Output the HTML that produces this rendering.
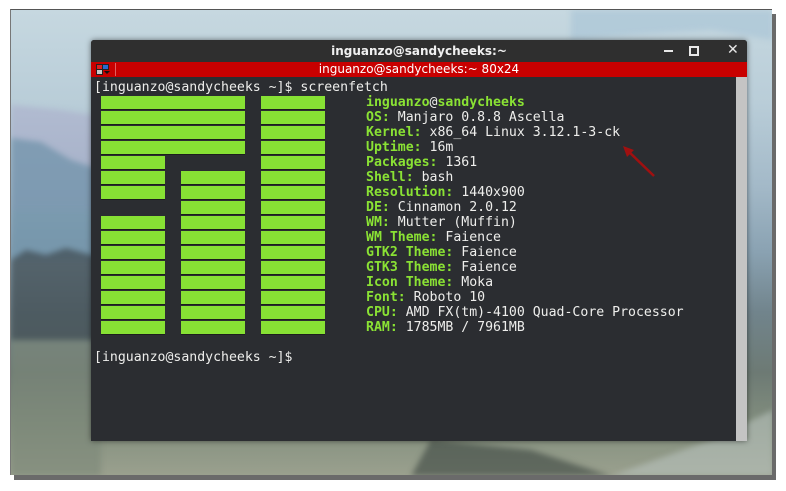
<!DOCTYPE html>
<html><head><meta charset="utf-8"><style>
*{margin:0;padding:0;box-sizing:border-box}
body{width:786px;height:491px;background:#fff;position:relative;overflow:hidden;font-family:"DejaVu Sans Mono","Liberation Mono",monospace}
.shadow{position:absolute;left:14px;top:14px;width:762px;height:466px;background:#6a6a6a}
.bg{position:absolute;left:10px;top:9px;width:762px;height:466px;overflow:hidden;border-top:1px solid #555;border-left:1px solid #777;
background:linear-gradient(180deg,#c6d8e0 0%,#b9cdd8 20%,#a3b9c8 38%,#8aa2b2 52%,#71848c 65%,#6d7a74 78%,#84907f 90%,#9aa08e 100%)}
.mt{position:absolute;left:0;top:0;filter:blur(3px)}
.win{position:absolute;left:91px;top:40px;width:656px;height:401px;background:#2b2d31;box-shadow:0 0 6px rgba(0,0,0,.5);border-radius:3px 3px 0 0;overflow:hidden}
.title{height:22px;background:#2f2f2f;color:#f0f0f0;font-family:"DejaVu Sans","Liberation Sans",sans-serif;font-weight:bold;font-size:12px;text-align:center;line-height:22px}
.red{height:15px;background:#c80000;color:#fff;font-family:"DejaVu Sans","Liberation Sans",sans-serif;font-size:12px;line-height:15px;text-align:center;position:relative}
.sb{position:absolute;right:0;top:37px;width:11px;bottom:0;background:#c4c4c4}
.t{position:absolute;left:3px;white-space:pre;color:#eeeeec;font-size:13.2px;line-height:15px}
.b{position:absolute;height:13px;background:#87e134;box-shadow:0 1px 0 #1c1e1c}
.g{color:#8ae234;font-weight:bold}
</style></head><body>
<div class="shadow"></div>
<div class="bg">
 <svg class="mt" width="762" height="466" viewBox="0 0 762 466">
  <path d="M0 95 L50 100 L100 108 L90 200 L0 200Z" fill="#a9a9c9" opacity=".5"/>
  <path d="M0 128 L30 132 L60 150 L90 160 L90 250 L0 250Z" fill="#6e92a8" opacity=".7"/>
  <path d="M0 250 L15 240 L35 245 L55 238 L80 245 L90 250 L90 330 L0 330Z" fill="#3e4a50" opacity=".7"/>
  <path d="M0 330 L90 330 L90 466 L0 466Z" fill="#7c8778" opacity=".6"/>
  <path d="M420 430 L520 440 L600 466 L400 466Z" fill="#3a4440" opacity=".6"/>
  <path d="M600 466 L700 430 L762 400 L762 466Z" fill="#b8c2bc" opacity=".6"/>
  <path d="M560 30 L620 25 L700 20 L762 30 L762 0 L560 0Z" fill="#a7c3d6" opacity=".6"/>
 </svg>
</div>
<div class="win">
 <div class="title">inguanzo@sandycheeks:~</div>
 <div style="position:absolute;left:573px;top:10px;width:9px;height:2px;background:#e8e8e8"></div>
 <div style="position:absolute;left:598px;top:6px;width:10px;height:10px;border:2px solid #e8e8e8"></div>
 <div style="position:absolute;left:636px;top:2px;color:#e8e8e8;font:bold 14px 'DejaVu Sans',sans-serif">✕</div>
 <div class="red">inguanzo@sandycheeks:~ 80x24
  <div style="position:absolute;left:5px;top:2px;width:7px;height:6px;background:#e02020;border:1px solid #222"></div>
  <div style="position:absolute;left:11px;top:2px;width:7px;height:6px;background:#2a6ad0;border:1px solid #222"></div>
  <div style="position:absolute;left:5px;top:7px;width:7px;height:6px;background:#c8c8c8;border:1px solid #222"></div>
  <div style="position:absolute;left:13px;top:9px;width:0;height:0;border-left:3px solid transparent;border-right:3px solid transparent;border-top:3px solid #111"></div>
  <div style="position:absolute;left:24px;top:1px;width:1px;height:13px;background:#e06060"></div>
 </div>
 <div class="sb"></div>
 <div class="t" style="top:40px">[inguanzo@sandycheeks ~]$ screenfetch</div>
 <div class="t" style="top:55px;left:275px"><span class="g">inguanzo</span>@<span class="g">sandycheeks</span>
<span class="g">OS:</span> Manjaro 0.8.8 Ascella
<span class="g">Kernel:</span> x86_64 Linux 3.12.1-3-ck
<span class="g">Uptime:</span> 16m
<span class="g">Packages:</span> 1361
<span class="g">Shell:</span> bash
<span class="g">Resolution:</span> 1440x900
<span class="g">DE:</span> Cinnamon 2.0.12
<span class="g">WM:</span> Mutter (Muffin)
<span class="g">WM Theme:</span> Faience
<span class="g">GTK2 Theme:</span> Faience
<span class="g">GTK3 Theme:</span> Faience
<span class="g">Icon Theme:</span> Moka
<span class="g">Font:</span> Roboto 10
<span class="g">CPU:</span> AMD FX(tm)-4100 Quad-Core Processor
<span class="g">RAM:</span> 1785MB / 7961MB</div>
 <div class="t" style="top:310px">[inguanzo@sandycheeks ~]$</div>
 <div class="b" style="left:10px;top:56px;width:144px"></div>
 <div class="b" style="left:10px;top:71px;width:144px"></div>
 <div class="b" style="left:10px;top:86px;width:144px"></div>
 <div class="b" style="left:10px;top:101px;width:144px"></div>
 <div class="b" style="left:10px;top:116px;width:64px"></div>
 <div class="b" style="left:10px;top:131px;width:64px"></div><div class="b" style="left:90px;top:131px;width:64px"></div>
 <div class="b" style="left:10px;top:146px;width:64px"></div><div class="b" style="left:90px;top:146px;width:64px"></div>
 <div class="b" style="left:90px;top:161px;width:64px"></div>
 <div class="b" style="left:10px;top:176px;width:64px"></div><div class="b" style="left:90px;top:176px;width:64px"></div>
 <div class="b" style="left:10px;top:191px;width:64px"></div><div class="b" style="left:90px;top:191px;width:64px"></div>
 <div class="b" style="left:10px;top:206px;width:64px"></div><div class="b" style="left:90px;top:206px;width:64px"></div>
 <div class="b" style="left:10px;top:221px;width:64px"></div><div class="b" style="left:90px;top:221px;width:64px"></div>
 <div class="b" style="left:10px;top:236px;width:64px"></div><div class="b" style="left:90px;top:236px;width:64px"></div>
 <div class="b" style="left:10px;top:251px;width:64px"></div><div class="b" style="left:90px;top:251px;width:64px"></div>
 <div class="b" style="left:10px;top:266px;width:64px"></div><div class="b" style="left:90px;top:266px;width:64px"></div>
 <div class="b" style="left:10px;top:281px;width:64px"></div><div class="b" style="left:90px;top:281px;width:64px"></div>
 <div class="b" style="left:170px;top:56px;width:64px"></div><div class="b" style="left:170px;top:71px;width:64px"></div>
 <div class="b" style="left:170px;top:86px;width:64px"></div><div class="b" style="left:170px;top:101px;width:64px"></div>
 <div class="b" style="left:170px;top:116px;width:64px"></div><div class="b" style="left:170px;top:131px;width:64px"></div>
 <div class="b" style="left:170px;top:146px;width:64px"></div><div class="b" style="left:170px;top:161px;width:64px"></div>
 <div class="b" style="left:170px;top:176px;width:64px"></div><div class="b" style="left:170px;top:191px;width:64px"></div>
 <div class="b" style="left:170px;top:206px;width:64px"></div><div class="b" style="left:170px;top:221px;width:64px"></div>
 <div class="b" style="left:170px;top:236px;width:64px"></div><div class="b" style="left:170px;top:251px;width:64px"></div>
 <div class="b" style="left:170px;top:266px;width:64px"></div><div class="b" style="left:170px;top:281px;width:64px"></div>
 <svg style="position:absolute;left:530px;top:105px" width="40" height="35"><path d="M33 31 L6 5" stroke="#a01010" stroke-width="2.5"/><path d="M2 1 L13 5 L6 12Z" fill="#a01010"/></svg>
</div>
</body></html>
